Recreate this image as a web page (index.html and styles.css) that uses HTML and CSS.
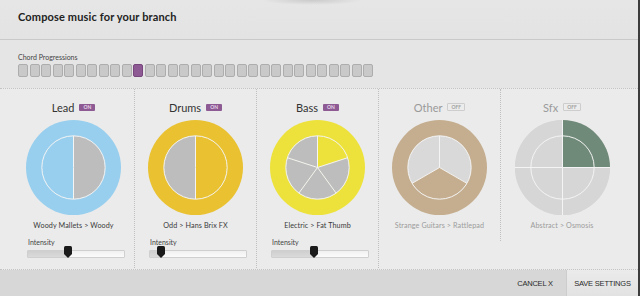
FILE: index.html
```html
<!DOCTYPE html>
<html lang="en">
<head>
  <meta charset="UTF-8" />
  <title>Compose music for your branch</title>
  <meta name="viewport" content="width=device-width, initial-scale=1.0" />
  <link rel="stylesheet" href="styles.css">
</head>

<body>

  <div class="window">
    <header>
      <h2>Compose music for your branch</h2>
    </header>

    <div class="chords">
      <div class="chords-label">Chord Progressions</div>
      <div class="chord-row" id="chordRow"></div>
    </div>

    <div class="tracks" id="tracks"></div>

    <footer>
      <button class="cancel">CANCEL X</button>
      <button class="save">SAVE SETTINGS</button>
    </footer>
  </div>

  <script>
    // Instrument tracks; slices go clockwise from 12 o'clock
    const tracks = [
      { name: "Lead", on: true, ring: "#98cfee", fill: "#98cfee", rest: "#bdbdbd", slices: 2, active: 1, preset: "Woody Mallets > Woody", intensity: 42 },
      { name: "Drums", on: true, ring: "#e9c131", fill: "#e9c131", rest: "#bdbdbd", slices: 2, active: 0, preset: "Odd > Hans Brix FX", intensity: 11 },
      { name: "Bass", on: true, ring: "#ede23b", fill: "#ede23b", rest: "#bdbdbd", slices: 5, active: 0, preset: "Electric > Fat Thumb", intensity: 44 },
      { name: "Other", on: false, ring: "#c5ae8f", fill: "#c5ae8f", rest: "#d9d9d9", slices: 3, active: 1, preset: "Strange Guitars > Rattlepad" },
      { name: "Sfx", on: false, ring: "#d6d6d6", fill: "#6f8a78", rest: "#d6d6d6", slices: 4, active: 0, full: true, preset: "Abstract > Osmosis" }
    ];

    const chordCount = 31;
    const chordSelected = 10;

    function point(r, deg) {
      const a = (deg - 90) * Math.PI / 180;
      return [(48 + r * Math.cos(a)).toFixed(2), (48 + r * Math.sin(a)).toFixed(2)];
    }

    function slicePath(r, from, to) {
      const large = to - from > 180 ? 1 : 0;
      return `M48 48 L${point(r, from).join(" ")} A${r} ${r} 0 ${large} 1 ${point(r, to).join(" ")} Z`;
    }

    function renderWheel(t) {
      const inner = 32;
      const r = t.full ? 48 : inner;
      const step = 360 / t.slices;
      let slices = "";
      let lines = "";
      for (let i = 0; i < t.slices; i++) {
        const color = i === t.active ? t.fill : t.rest;
        const [x, y] = point(r, i * step);
        slices += `<path d="${slicePath(r, i * step, (i + 1) * step)}" fill="${color}" />`;
        lines += `<line x1="48" y1="48" x2="${x}" y2="${y}" />`;
      }
      return `
        <svg class="wheel" viewBox="0 0 96 96" width="96" height="96">
          <circle cx="48" cy="48" r="48" fill="${t.ring}" />
          ${slices}
          <g class="wheel-lines">
            <circle cx="48" cy="48" r="${inner}" fill="none" />
            ${lines}
          </g>
        </svg>`;
    }

    function renderSlider(value) {
      return `
        <div class="intensity">
          <div class="intensity-label">Intensity</div>
          <div class="slider">
            <div class="slider-fill" style="width: ${value}%"></div>
            <svg class="slider-thumb" style="left: ${value}%" viewBox="0 0 8 12" width="8" height="12">
              <path d="M1.5 0 H6.5 Q8 0 8 1.5 V8 L4 12 L0 8 V1.5 Q0 0 1.5 0 Z" fill="#1b1b1b" />
            </svg>
          </div>
        </div>`;
    }

    const chordRow = document.getElementById("chordRow");
    for (let i = 0; i < chordCount; i++) {
      const box = document.createElement("span");
      box.className = i === chordSelected ? "chord selected" : "chord";
      chordRow.appendChild(box);
    }

    const container = document.getElementById("tracks");
    tracks.forEach(t => {
      const panel = document.createElement("div");
      panel.className = t.on ? "track" : "track off";
      panel.innerHTML = `
        <div class="track-title">
          <span>${t.name}</span>
          <span class="badge">${t.on ? "ON" : "OFF"}</span>
        </div>
        ${renderWheel(t)}
        <div class="preset">${t.preset}</div>
        ${t.on ? renderSlider(t.intensity) : ""}
      `;
      container.appendChild(panel);
    });
  </script>
</body>
</html>
```

FILE: styles.css
```css
body {
  margin: 0;
  padding: 0;
  background: #f2f2f2;
  font-family: Lato, "Open Sans", sans-serif;
  color: #3a3a3a;
}

.window {
  width: 638px;
  height: 296px;
  background: #e8e8e8;
  border-right: 2px solid #3c3c3c;
  display: flex;
  flex-direction: column;
  overflow: hidden;
}

header {
  height: 40px;
  box-sizing: border-box;
  display: flex;
  align-items: center;
  padding-left: 18px;
  border-bottom: 1px solid #c9c9c9;
  background:
    radial-gradient(ellipse 50px 5px at 312px 0, rgba(0, 0, 0, 0.12), transparent),
    linear-gradient(#e6e6e6, #e3e3e3);
}

header h2 {
  margin: 0 0 6px;
  font-size: 11px;
  font-weight: bold;
  color: #222;
  letter-spacing: 0.15px;
}

.chords {
  height: 48px;
  box-sizing: border-box;
  padding: 12px 0 0 18px;
  background: #e5e5e5;
}

.chords-label {
  font-size: 7px;
  line-height: 10px;
  color: #444;
}

.chord-row {
  display: flex;
  gap: 1.5px;
  margin-top: 2px;
}

.chord {
  width: 8px;
  height: 11px;
  background: #c9c9c9;
  border: 1px solid #adadad;
  border-radius: 2px;
}

.chord.selected {
  background: #8d5a93;
  border-color: #77467d;
}

.tracks {
  height: 182px;
  box-sizing: border-box;
  display: flex;
  align-items: flex-start;
  padding-left: 13px;
  background: #ebebeb;
  border-top: 1px dotted #c4c4c4;
  border-bottom: 1px dotted #c4c4c4;
}

.track {
  width: 122px;
  box-sizing: border-box;
  display: flex;
  flex-direction: column;
  align-items: center;
  padding: 11px 0 10px;
  border-right: 1px dotted #c0c0c0;
}

.track:last-child {
  border-right: none;
}

.track-title {
  height: 14px;
  display: flex;
  align-items: center;
  gap: 5px;
  font-size: 11px;
  color: #333;
}

.badge {
  font-size: 5px;
  line-height: 7px;
  padding: 0 4px;
  border-radius: 1px;
  background: #8d5a93;
  color: #e6d6ea;
  font-weight: bold;
}

.off .track-title {
  color: #9a9a9a;
}

.off .badge {
  background: #ececec;
  border: 1px solid #cdcdcd;
  color: #a0a0a0;
  line-height: 6px;
  padding: 0 3px;
}

.wheel {
  display: block;
  margin-top: 6px;
  width: 95px;
  height: 95px;
}

.wheel-lines {
  stroke: #f4f4f4;
  stroke-width: 1;
}

.preset {
  margin-top: 6px;
  font-size: 7.2px;
  line-height: 10px;
  letter-spacing: 0.1px;
  color: #3a3a3a;
}

.off .preset {
  color: #9c9c9c;
}

.intensity {
  align-self: stretch;
  margin: 7px 9px 0 14px;
}

.intensity-label {
  font-size: 7px;
  line-height: 9px;
  margin-left: 1px;
  color: #444;
}

.slider {
  position: relative;
  height: 6px;
  margin-top: 3px;
  background: linear-gradient(#f0f0f0, #fbfbfb);
  border: 1px solid #cfcfcf;
  border-radius: 1px;
}

.slider-fill {
  height: 100%;
  background: linear-gradient(#cfcfcf, #dadada);
}

.slider-thumb {
  position: absolute;
  top: -5px;
  margin-left: -4px;
}

footer {
  flex: 1;
  display: flex;
  justify-content: flex-end;
  background: #d7d7d7;
}

footer button {
  border: none;
  background: none;
  font-family: "Liberation Sans Narrow", "Liberation Sans", sans-serif;
  font-size: 7.5px;
  color: #2a2a2a;
  padding: 0;
  letter-spacing: -0.2px;
}

.cancel {
  width: 56px;
  margin-right: 3px;
}

.save {
  width: 72px;
  background: linear-gradient(#ebebeb, #e2e2e2) !important;
  border-left: 1px solid #cdcdcd !important;
}
```
